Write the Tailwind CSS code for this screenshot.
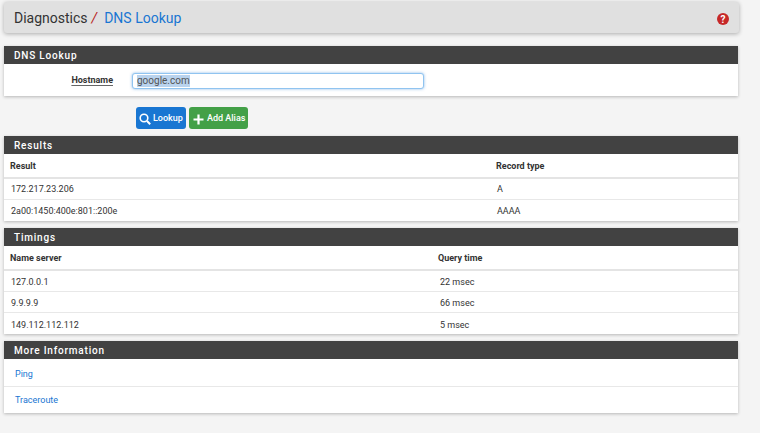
<!DOCTYPE html>
<html lang="en">
<head>
    <meta charset="UTF-8" />
    <title>Diagnostics: DNS Lookup</title>
    <script src="https://cdn.jsdelivr.net/npm/@tailwindcss/browser@4"></script>
</head>
<body class="bg-[#f4f4f4] w-[760px] h-[433px] overflow-hidden font-['Roboto',sans-serif] text-[#333]">
<div class="pl-[4px] pr-[22px] pt-[2px]">

    <!-- breadcrumb -->
    <div class="h-[31px] -mr-px bg-[#e0e0e0] rounded-[3px] shadow-[0_1px_4px_rgba(0,0,0,0.3)] flex items-center pt-[2px] pl-[10px] pr-[10px] text-[14px]">
        <span class="text-[#333]">Diagnostics</span>
        <span class="text-[#b71c1c] ml-[4px] italic">/</span>
        <span class="text-[#1976d2] ml-[7px]">DNS Lookup</span>
        <svg class="ml-auto" width="12" height="12" viewBox="0 0 12 12">
            <circle cx="6" cy="6" r="6" fill="#c62828" />
            <text x="6" y="9.5" text-anchor="middle" font-size="10" font-weight="700" fill="#fff" font-family="Roboto">?</text>
        </svg>
    </div>

    <!-- lookup form -->
    <div class="mt-[13px] bg-white shadow-[0_1px_3px_rgba(0,0,0,0.25)]">
        <h2 class="h-[18px] bg-[#424242] text-white text-[10px] font-medium tracking-[0.8px] leading-[20px] pl-[10px]">DNS Lookup</h2>
        <div class="h-[32px] flex items-center">
            <span class="w-[109px] mt-[2px] text-right text-[9px] font-bold underline decoration-[#666] underline-offset-2 text-[#333]">Hostname</span>
            <div class="ml-[19px] mt-[2px] w-[292px] h-[16px] bg-white border border-[#90c4f0] rounded-[3px] shadow-[0_0_3px_rgba(25,118,210,0.5)] flex items-center pl-[4px]">
                <span class="text-[10px] text-[#555] bg-[#b9d3ee] leading-[12px]">google.com</span>
            </div>
        </div>
    </div>

    <div class="flex gap-[3px] ml-[132px] mt-[11px]">
        <button class="h-[22px] w-[50px] pt-[2px] bg-[#1976d2] rounded-[3px] text-white text-[9px] font-medium flex items-center pl-[3px] gap-[2px]">
            <svg width="12" height="12" viewBox="0 0 12 12" fill="none" stroke="#fff" stroke-width="1.6"><circle cx="5" cy="5" r="3.8" /><path d="M8 8l3.2 3.2" stroke-width="2" /></svg>
            Lookup
        </button>
        <button class="h-[22px] w-[59px] pt-[2px] bg-[#43a047] rounded-[3px] text-white text-[9px] font-medium flex items-center pl-[4px] gap-[3px]">
            <svg width="11" height="11" viewBox="0 0 11 11" fill="#fff"><path d="M4.4 0.5h2.2v3.9h3.9v2.2H6.6v3.9H4.4V6.6H0.5V4.4h3.9z" /></svg>
            Add Alias
        </button>
    </div>

    <!-- results -->
    <div class="mt-[7px] bg-white shadow-[0_1px_3px_rgba(0,0,0,0.25)]">
        <h2 class="h-[18px] bg-[#424242] text-white text-[10px] font-medium tracking-[0.8px] leading-[20px] pl-[10px]">Results</h2>
        <div class="grid grid-cols-[486px_1fr] h-[25px] pt-[2px] items-center text-[9px] font-bold border-b-2 border-[#e4e4e4] pl-[6px]">
            <span>Result</span><span>Record type</span>
        </div>
        <div class="grid grid-cols-[486px_1fr] h-[21px] pt-[2px] items-center text-[9px] border-b border-[#e8e8e8] pl-[7px]">
            <span>172.217.23.206</span><span>A</span>
        </div>
        <div class="grid grid-cols-[486px_1fr] h-[21px] pt-[2px] items-center text-[9px] pl-[7px]">
            <span>2a00:1450:400e:801::200e</span><span>AAAA</span>
        </div>
    </div>

    <!-- timings -->
    <div class="mt-[7px] bg-white shadow-[0_1px_3px_rgba(0,0,0,0.25)]">
        <h2 class="h-[18px] bg-[#424242] text-white text-[10px] font-medium tracking-[0.8px] leading-[20px] pl-[10px]">Timings</h2>
        <div class="grid grid-cols-[428px_1fr] h-[25px] pt-[2px] items-center text-[9px] font-bold border-b-2 border-[#e4e4e4] pl-[6px]">
            <span>Name server</span><span>Query time</span>
        </div>
        <div class="grid grid-cols-[429px_1fr] h-[21px] pt-[4px] items-center text-[9px] border-b border-[#e8e8e8] pl-[7px]">
            <span>127.0.0.1</span><span>22 msec</span>
        </div>
        <div class="grid grid-cols-[429px_1fr] h-[21px] pt-[4px] items-center text-[9px] border-b border-[#e8e8e8] pl-[7px]">
            <span>9.9.9.9</span><span>66 msec</span>
        </div>
        <div class="grid grid-cols-[429px_1fr] h-[21px] pt-[4px] items-center text-[9px] pl-[7px]">
            <span>149.112.112.112</span><span>5 msec</span>
        </div>
    </div>

    <!-- more info -->
    <div class="mt-[7px] bg-white shadow-[0_1px_3px_rgba(0,0,0,0.25)]">
        <h2 class="h-[18px] bg-[#424242] text-white text-[10px] font-medium tracking-[0.8px] leading-[20px] pl-[10px]">More Information</h2>
        <div class="h-[28px] pt-[4px] flex items-center text-[9px] text-[#1976d2] border-b border-[#e8e8e8] pl-[11px]">Ping</div>
        <div class="h-[26px] pt-[2px] flex items-center text-[9px] text-[#1976d2] pl-[11px]">Traceroute</div>
    </div>

</div>
</body>
</html>
